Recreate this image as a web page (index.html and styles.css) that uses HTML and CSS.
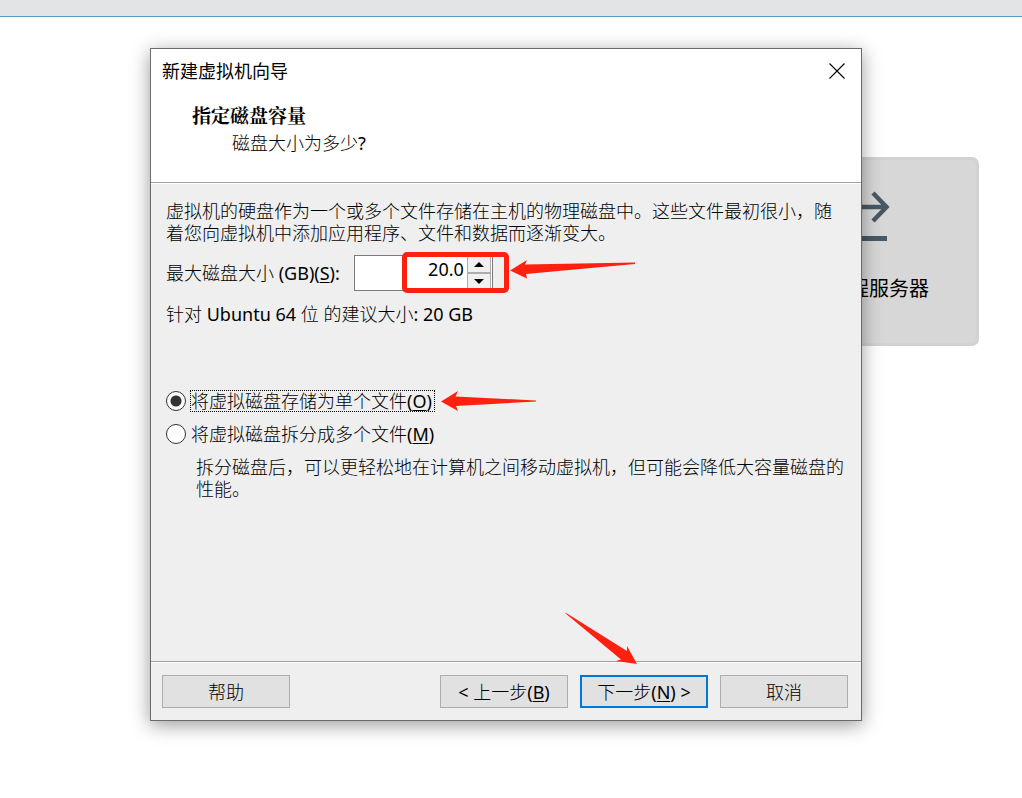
FILE: index.html
```html
<!DOCTYPE html>
<html lang="zh-CN">
<head>
  <meta charset="UTF-8">
  <meta name="viewport" content="width=device-width, initial-scale=1.0">
  <title>新建虚拟机向导</title>
  <link rel="stylesheet" href="styles.css">
</head>
<body>
  <div class="topbar"></div>

  <main class="desktop">
    <!-- Home tile behind the wizard -->
    <a href="#" class="tile">
      <svg class="tile-icon" width="58" height="54" viewBox="0 0 58 54" aria-hidden="true">
        <path d="M0 19H53M41 5L54.500 19L41 33" fill="none" stroke="#485965" stroke-width="4.5"/>
        <path d="M0 50.5H55" stroke="#485965" stroke-width="5"/>
      </svg>
      <span class="tile-label">程服务器</span>
    </a>

    <form class="dialog" onsubmit="return false">
      <header class="dialog-header">
        <div class="titlebar">
          <span>新建虚拟机向导</span>
          <button type="button" class="close" aria-label="关闭">
            <svg width="16" height="16" viewBox="0 0 16 16"><path d="M.5 .5L15.5 15.5M15.5 .5L.5 15.5" stroke="#000" stroke-width="1.1"/></svg>
          </button>
        </div>
        <h1>指定磁盘容量</h1>
        <p class="subtitle">磁盘大小为多少<span class="en">?</span></p>
      </header>

      <div class="dialog-body">
        <p>虚拟机的硬盘作为一个或多个文件存储在主机的物理磁盘中。这些文件最初很小，随着您向虚拟机中添加应用程序、文件和数据而逐渐变大。</p>

        <div class="size-row">
          <label for="size">最大磁盘大小 <span class="en">(GB)(<u>S</u>):</span></label>
          <div class="spinner">
            <input type="text" id="size" value="20.0">
            <div class="spin-buttons">
              <button type="button" aria-label="增加"><svg width="10" height="5" viewBox="0 0 10 5"><path d="M0 5L5 0L10 5Z"/></svg></button>
              <button type="button" aria-label="减少"><svg width="10" height="5" viewBox="0 0 10 5"><path d="M0 0L5 5L10 0Z"/></svg></button>
            </div>
            <div class="mark-box"></div>
            <svg class="mark mark-size" width="126" height="20" viewBox="0 0 126 20"><path d="M0 10.5L17 0L15 4.500L125 2.500V4L70 9L16 14L17 18.500Z"/></svg>
          </div>
        </div>

        <p class="advice">针对 <span class="en">Ubuntu 64</span> 位 的建议大小<span class="en">: 20 GB</span></p>

        <div class="options">
          <div class="option">
            <input type="radio" name="store" id="single" checked>
            <label for="single" class="focused">将虚拟磁盘存储为单个文件<span class="en">(<u>O</u>)</span></label>
            <svg class="mark mark-option" width="96" height="20" viewBox="0 0 96 20"><path d="M0 10.500L17 0L14.500 5.500L95 9.500V10.500L15 15L17 20Z"/></svg>
          </div>
          <div class="option">
            <input type="radio" name="store" id="multi">
            <label for="multi">将虚拟磁盘拆分成多个文件<span class="en">(<u>M</u>)</span></label>
          </div>
          <p class="hint">拆分磁盘后，可以更轻松地在计算机之间移动虚拟机，但可能会降低大容量磁盘的性能。</p>
        </div>
      </div>

      <footer class="dialog-footer">
        <button type="button" class="btn help">帮助</button>
        <button type="button" class="btn"><span class="en">&lt;</span> 上一步<span class="en">(<u>B</u>)</span></button>
        <div class="next">
          <button type="submit" class="btn primary">下一步<span class="en">(<u>N</u>) &gt;</span></button>
          <svg class="mark mark-next" width="72" height="52" viewBox="0 0 72 52"><path d="M0 0L2 .5L62 38L62 33L72 51L51 48L56 46.500Z"/></svg>
        </div>
        <button type="button" class="btn">取消</button>
      </footer>
    </form>
  </main>
</body>
</html>
```

FILE: styles.css
```css
* {
  box-sizing: border-box;
}
body {
  margin: 0;
  background: #fff;
  color: #000;
  font-family: "Noto Sans", "Noto Sans CJK SC", sans-serif;
  font-size: 18px;
  font-weight: 300;
  line-height: 22px;
}
h1, p {
  margin: 0;
}
input, button {
  font: inherit;
  color: inherit;
}
button {
  padding: 0;
}
u {
  text-underline-offset: 2px;
}
/* Latin text is a step heavier than the Chinese around it */
.en {
  font-weight: 400;
}
.topbar {
  height: 17px;
  background: #e3e4e6;
  border-bottom: 1px solid #5c9cbd;
}

/* The tile and the dialog share one cell, the dialog on top */
.desktop {
  display: grid;
  padding: 31px 43px 77px 150px;
}
.tile {
  grid-area: 1 / 1;
  justify-self: end;
  display: flex;
  flex-direction: column;
  align-items: flex-end;
  gap: 35px;
  width: 148px;
  height: 189px;
  margin-top: 109px;
  padding: 28px 47px 0 0;
  background: #d7d7d7;
  border: 3px solid #d2d2d2;
  border-radius: 7px;
  color: #000;
  font-family: "Noto Sans CJK SC", sans-serif;
  font-size: 20px;
  font-weight: 400;
  text-decoration: none;
}
.tile-icon {
  margin-right: 39px;
}
.tile-label {
  white-space: nowrap;
}

.dialog {
  grid-area: 1 / 1;
  z-index: 1;
  display: flex;
  flex-direction: column;
  margin-right: 117px;
  background: #efefef;
  border: 1px solid #6b6b6b;
  box-shadow: 0 4px 18px rgba(0, 0, 0, 0.4);
}
.dialog-header {
  padding-bottom: 28px;
  background: #fff;
  border-bottom: 1px solid #a0a0a0;
}
.titlebar {
  display: flex;
  align-items: center;
  justify-content: space-between;
  height: 43px;
  padding: 0 16px 0 11px;
  font-weight: 400;
}
.close {
  display: flex;
  border: 0;
  background: none;
}
h1 {
  padding: 12px 0 6px 41px;
  font-family: "Noto Serif CJK SC", "Noto Sans CJK SC", serif;
  font-size: 19px;
  font-weight: 700;
}
.subtitle {
  padding-left: 81px;
}
.dialog-body {
  padding: 16px 15px 161px;
  border-top: 1px solid #fff;
  border-bottom: 1px solid #a0a0a0;
}
.size-row {
  display: flex;
  align-items: center;
  gap: 14px;
  margin-top: 11px;
}

.spinner {
  position: relative;
  display: flex;
  width: 139px;
  height: 36px;
  background: #fff;
  border: 1px solid #7a7a7a;
}
.spinner input {
  flex: 1;
  min-width: 0;
  padding: 0 3px 8px;
  border: 0;
  background: none;
  font-weight: 400;
  text-align: right;
  outline: 0;
}
.spin-buttons {
  display: flex;
  flex-direction: column;
  width: 25px;
  padding-right: 1px;
}
.spin-buttons button {
  flex: 1;
  display: flex;
  align-items: center;
  justify-content: center;
  border: 1px solid #acacac;
  background: #f0f0f0;
}

/* Red annotations */
.mark-box {
  position: absolute;
  top: -4px;
  right: -17px;
  width: 107px;
  height: 41px;
  border: 5px solid #ff2010;
  border-radius: 5px;
  pointer-events: none;
}
.mark {
  position: absolute;
  fill: #ff2010;
  pointer-events: none;
}
.mark-size {
  top: 4px;
  left: 155px;
}
.mark-option {
  top: 1px;
  left: 275px;
}
.mark-next {
  right: 71px;
  bottom: 43px;
}

.advice {
  margin-top: 12px;
}
.options {
  display: flex;
  flex-direction: column;
  gap: 11px;
  margin-top: 65px;
}
.option {
  position: relative;
  display: flex;
  align-items: center;
  gap: 4px;
}
.option input {
  width: 20px;
  height: 20px;
  margin: 0;
  appearance: none;
  background: #fff;
  border: 1px solid #333;
  border-radius: 50%;
}
.option input:checked {
  background: radial-gradient(circle, #333 5px, #fff 6px);
}
.option label {
  padding: 0 1px;
}
.option .focused {
  padding-right: 3px;
  outline: 1px dotted #000;
  outline-offset: -1px;
}
.hint {
  padding-left: 30px;
}

.dialog-footer {
  display: flex;
  gap: 12px;
  padding: 12px 13px 12px 11px;
  border-top: 1px solid #fff;
}
.btn {
  width: 128px;
  height: 33px;
  background: #e1e1e1;
  border: 1px solid #adadad;
}
.help {
  margin-right: auto;
}
.next {
  position: relative;
}
.primary {
  border: 2px solid #0078d7;
}
```
